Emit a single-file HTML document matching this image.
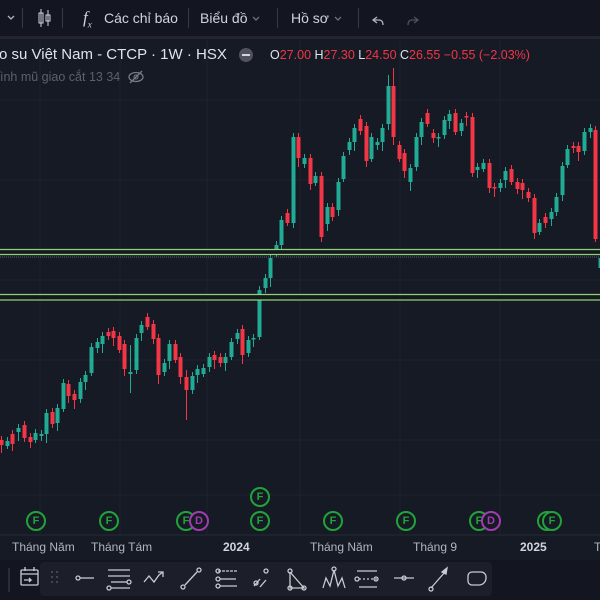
<!DOCTYPE html>
<html><head><meta charset="utf-8"><style>
body{margin:0;width:600px;height:600px;overflow:hidden;background:#161a25;font-family:"Liberation Sans",sans-serif;position:relative}
.tb{position:absolute;left:0;top:0;width:600px;height:36px;background:#131620;border-bottom:3px solid #23262f}
.t{position:absolute;color:#d1d4dc;font-size:14px;white-space:nowrap}
.sep{position:absolute;top:8px;width:1px;height:20px;background:#363a45}
.f{position:absolute;width:16px;height:16px;border:2px solid #22a33a;border-radius:50%;color:#22a33a;font-size:11px;font-weight:bold;text-align:center;line-height:16px;background:#161a25}
.d{border-color:#a03cb0;color:#a03cb0}
.lbl{position:absolute;top:540px;color:#b2b5be;font-size:12px;white-space:nowrap}
</style></head><body>
<div class="tb"></div>
<svg style="position:absolute;left:0;top:0" width="600" height="40">
<path d="M8 16l3 3 3-3" stroke="#b2b5be" fill="none" stroke-width="1.3"/>
<rect x="39" y="13" width="4" height="10" fill="none" stroke="#d1d4dc"/><line x1="41" y1="9" x2="41" y2="27" stroke="#d1d4dc"/>
<rect x="46" y="15" width="4" height="6" fill="none" stroke="#d1d4dc"/><line x1="48" y1="10" x2="48" y2="26" stroke="#d1d4dc"/>
<path d="M253 17l3 3 3-3" stroke="#787b86" fill="none" stroke-width="1.2"/>
<path d="M335 17l3 3 3-3" stroke="#787b86" fill="none" stroke-width="1.2"/>
<path d="M377 17l-4 3 4 3M373 20h6q4 0 4 5" stroke="#b2b5be" fill="none" stroke-width="1.3"/>
<path d="M414 17l4 3-4 3M418 20h-6q-4 0-4 5" stroke="#50535e" fill="none" stroke-width="1.3"/>
</svg>
<div class="sep" style="left:22px"></div><div class="sep" style="left:62px"></div><div class="sep" style="left:188px"></div><div class="sep" style="left:277px"></div><div class="sep" style="left:358px"></div>
<div class="t" style="left:83px;top:8px;font-size:17px;font-style:italic;font-family:'Liberation Serif',serif">f<sub style="font-size:9px">x</sub></div>
<div class="t" style="left:104px;top:10px">Các chỉ báo</div>
<div class="t" style="left:200px;top:10px">Biểu đồ</div>
<div class="t" style="left:291px;top:10px">Hồ sơ</div>

<svg style="position:absolute;left:0;top:40px" width="600" height="520">
<g stroke="#1f2330" stroke-width="1">
<line x1="40" y1="0" x2="40" y2="495"/><line x1="120" y1="0" x2="120" y2="495"/><line x1="207" y1="0" x2="207" y2="495"/><line x1="300" y1="0" x2="300" y2="495"/><line x1="400" y1="0" x2="400" y2="495"/><line x1="500" y1="0" x2="500" y2="495"/>
<line x1="0" y1="60" x2="600" y2="60"/><line x1="0" y1="140" x2="600" y2="140"/><line x1="0" y1="240" x2="600" y2="240"/><line x1="0" y1="320" x2="600" y2="320"/><line x1="0" y1="400" x2="600" y2="400"/><line x1="0" y1="455" x2="600" y2="455"/>
</g>
<line x1="0" y1="495" x2="600" y2="495" stroke="#262a35"/>
</svg>
<svg style="position:absolute;left:0;top:0" width="600" height="560" id="cs"></svg>
<svg style="position:absolute;left:0;top:0" width="600" height="560">
<rect x="0" y="249" width="600" height="6" fill="#141a1c"/>
<line x1="0" y1="249.5" x2="600" y2="249.5" stroke="#8fd07a" stroke-width="1.3"/>
<line x1="0" y1="254.5" x2="600" y2="254.5" stroke="#8fd07a" stroke-width="1.3"/>
<line x1="0" y1="257" x2="600" y2="257" stroke="#5a6070" stroke-dasharray="1 1"/>
<rect x="0" y="294" width="600" height="6" fill="#141a1c"/>
<line x1="0" y1="294.5" x2="600" y2="294.5" stroke="#8fd07a" stroke-width="1.3"/>
<line x1="0" y1="300" x2="600" y2="300" stroke="#8fd07a" stroke-width="1.3"/>
</svg>

<div class="t" style="left:-1px;top:46px;font-size:15px;color:#e0e3eb">o su Việt Nam - CTCP · 1W · HSX</div>
<div style="position:absolute;left:239px;top:48px;width:14px;height:14px;border-radius:50%;background:#50535e"><div style="margin:6px 3px;height:2px;background:#d1d4dc"></div></div>
<div class="t" style="left:270px;top:48px;font-size:12.5px;color:#e0e3eb">O<span style="color:#f23645">27.00</span> H<span style="color:#f23645">27.30</span> L<span style="color:#f23645">24.50</span> C<span style="color:#f23645">26.55</span> <span style="color:#f23645">−0.55 (−2.03%)</span></div>
<div class="t" style="left:0px;top:70px;font-size:12.5px;color:#5d606b">ình mũ giao cắt 13 34</div>
<svg style="position:absolute;left:127px;top:70px" width="18" height="14"><ellipse cx="9" cy="7" rx="7" ry="4.5" fill="none" stroke="#787b86" stroke-width="1.3"/><circle cx="9" cy="7" r="2" fill="none" stroke="#787b86"/><line x1="3" y1="13" x2="15" y2="1" stroke="#787b86" stroke-width="1.3"/></svg>

<div class="f" style="left:26px;top:511px">F</div>
<div class="f" style="left:99px;top:511px">F</div>
<div class="f" style="left:176px;top:511px">F</div><div class="f d" style="left:189px;top:511px">D</div>
<div class="f" style="left:250px;top:487px">F</div><div class="f" style="left:250px;top:511px">F</div>
<div class="f" style="left:323px;top:511px">F</div>
<div class="f" style="left:396px;top:511px">F</div>
<div class="f" style="left:469px;top:511px">F</div><div class="f d" style="left:481px;top:511px">D</div>
<div class="f" style="left:537px;top:511px">F</div><div class="f" style="left:542px;top:511px">F</div>
<div class="lbl" style="left:12px">Tháng Năm</div>
<div class="lbl" style="left:91px">Tháng Tám</div>
<div class="lbl" style="left:223px;font-weight:bold;color:#d1d4dc">2024</div>
<div class="lbl" style="left:310px">Tháng Năm</div>
<div class="lbl" style="left:413px">Tháng 9</div>
<div class="lbl" style="left:520px;font-weight:bold;color:#d1d4dc">2025</div>
<div class="lbl" style="left:594px">T</div>

<div style="position:absolute;left:0;top:560px;width:600px;height:40px;background:#131620"></div>
<div style="position:absolute;left:40px;top:562px;width:452px;height:34px;background:#1c1f29;border-radius:4px"></div>
<svg style="position:absolute;left:0;top:560px" width="600" height="40" fill="none" stroke="#c8cbd3" stroke-width="1.3">
<line x1="9" y1="8" x2="9" y2="32" stroke="#363a45"/>
<rect x="21" y="10" width="17" height="15" rx="1"/><line x1="21" y1="14" x2="38" y2="14"/><line x1="25" y1="7" x2="25" y2="11"/><line x1="34" y1="7" x2="34" y2="11"/><path d="M24 20h7l-2-2M31 20l-2 2"/>
<g fill="#50535e" stroke="none"><circle cx="52" cy="12" r="1"/><circle cx="57" cy="12" r="1"/><circle cx="52" cy="17" r="1"/><circle cx="57" cy="17" r="1"/><circle cx="52" cy="22" r="1"/><circle cx="57" cy="22" r="1"/></g>
<circle cx="78" cy="18" r="2"/><line x1="80" y1="18" x2="94" y2="18"/>
<line x1="108" y1="10" x2="130" y2="10"/><line x1="108" y1="16" x2="130" y2="16"/><line x1="111" y1="22" x2="127" y2="22"/><circle cx="129" cy="22" r="2"/><line x1="111" y1="28" x2="130" y2="28"/><circle cx="109" cy="28" r="2"/>
<path d="M144 22l5-6 5 6 5-7 4-3M158 12h5v5"/>
<circle cx="183" cy="27" r="2"/><line x1="185" y1="25" x2="197" y2="12"/><circle cx="199" cy="10" r="2"/>
<line x1="218" y1="11" x2="237" y2="11" stroke-dasharray="3 1"/><circle cx="218" cy="11" r="2"/><circle cx="218" cy="19" r="2"/><line x1="220" y1="19" x2="236" y2="19"/><circle cx="218" cy="26" r="2"/><line x1="220" y1="26" x2="237" y2="26"/>
<path d="M254 26l6-7M260 27l6-7"/><circle cx="266" cy="11" r="2"/><circle cx="256" cy="23" r="2"/>
<path d="M290 12v16h14l-14-16"/><circle cx="290" cy="11" r="2"/><circle cx="304" cy="28" r="2"/><circle cx="290" cy="28" r="2"/>
<path d="M323 28l3-10 4 8 4-16 4 16 4-8 3 10"/><circle cx="334" cy="9" r="2"/>
<line x1="357" y1="11" x2="377" y2="11"/><circle cx="357" cy="19" r="2"/><line x1="359" y1="19" x2="377" y2="19" stroke-dasharray="2 2"/><circle cx="376" cy="19" r="2"/><line x1="359" y1="27" x2="377" y2="27"/>
<line x1="394" y1="18" x2="414" y2="18"/><circle cx="404" cy="18" r="2"/>
<line x1="431" y1="28" x2="445" y2="12"/><circle cx="431" cy="29" r="2"/><path d="M442 12l5-4-1 6z" fill="#c8cbd3"/>
<path d="M472 12h9a5 5 0 0 1 5 5v1a7 7 0 0 1-7 7h-7a4 4 0 0 1-4-4v-5a4 4 0 0 1 4-4z"/>
</svg>
<script>
var C=[[1,440,445],[7,446,441],[12,434,444],[18,432,428],[24,425,438],[30,437,442],[35,440,433],[41,436,434],[46,434,413],[52,412,424],[57,423,408],[63,409,383],[68,384,396],[74,394,400],[80,399,382],[85,382,375],[91,373,347],[97,348,342],[102,344,336],[108,332,336],[113,331,338],[119,336,350],[124,344,369],[130,374,372,345,393],[136,370,338],[141,333,325],[147,317,327],[153,324,339],[158,338,375],[164,372,363],[169,361,344],[175,344,360],[180,357,377],[186,377,390,370,420],[192,390,376],[197,375,369],[203,374,368],[209,367,357],[214,355,360],[220,357,363],[225,363,357],[231,357,342],[237,339,333],[242,329,355],[248,353,340],[253,339,338],[259,337,290],[265,288,278],[270,278,258],[276,253,245],[281,245,220],[287,213,223],[293,223,137],[298,137,158],[304,164,158],[310,158,184],[315,183,176],[321,176,237],[327,224,207],[332,207,217],[338,210,182],[343,179,156],[349,150,142],[354,142,128],[360,119,131],[366,126,161],[371,159,137],[377,145,142],[382,142,128],[388,124,86,75,130],[393,86,137,68,145],[399,145,159],[404,153,171],[410,182,168],[416,167,137],[421,137,122],[427,113,124],[433,133,138],[438,138,137],[444,135,120],[449,121,114],[455,113,132],[461,131,123],[466,116,117],[472,117,173],[477,170,167],[483,169,163],[489,163,188],[494,187,188],[500,188,183],[505,180,171],[511,169,182],[517,182,189],[522,183,190],[528,192,198],[534,198,233],[539,232,223],[545,217,223],[551,219,212],[556,212,197],[562,195,166],[567,165,149],[573,146,148],[578,146,152],[584,151,132],[590,132,128],[595,130,239],[600,268,258]];
var s='';C.forEach(function(c){var x=c[0],o=c[1],cl=c[2],up=cl<o,col=up?'#22ab94':'#f23645',t=Math.min(o,cl),b=Math.max(o,cl);var h=c[3]||t-4-(x*7%7),l=c[4]||b+3+(x*5%7);s+='<line x1="'+(x+0.5)+'" y1="'+h+'" x2="'+(x+0.5)+'" y2="'+l+'" stroke="'+col+'"/><rect x="'+(x-1.5)+'" y="'+t+'" width="4" height="'+Math.max(1.5,b-t)+'" fill="'+col+'"/>';});
document.getElementById('cs').innerHTML=s;
</script>
</body></html>
